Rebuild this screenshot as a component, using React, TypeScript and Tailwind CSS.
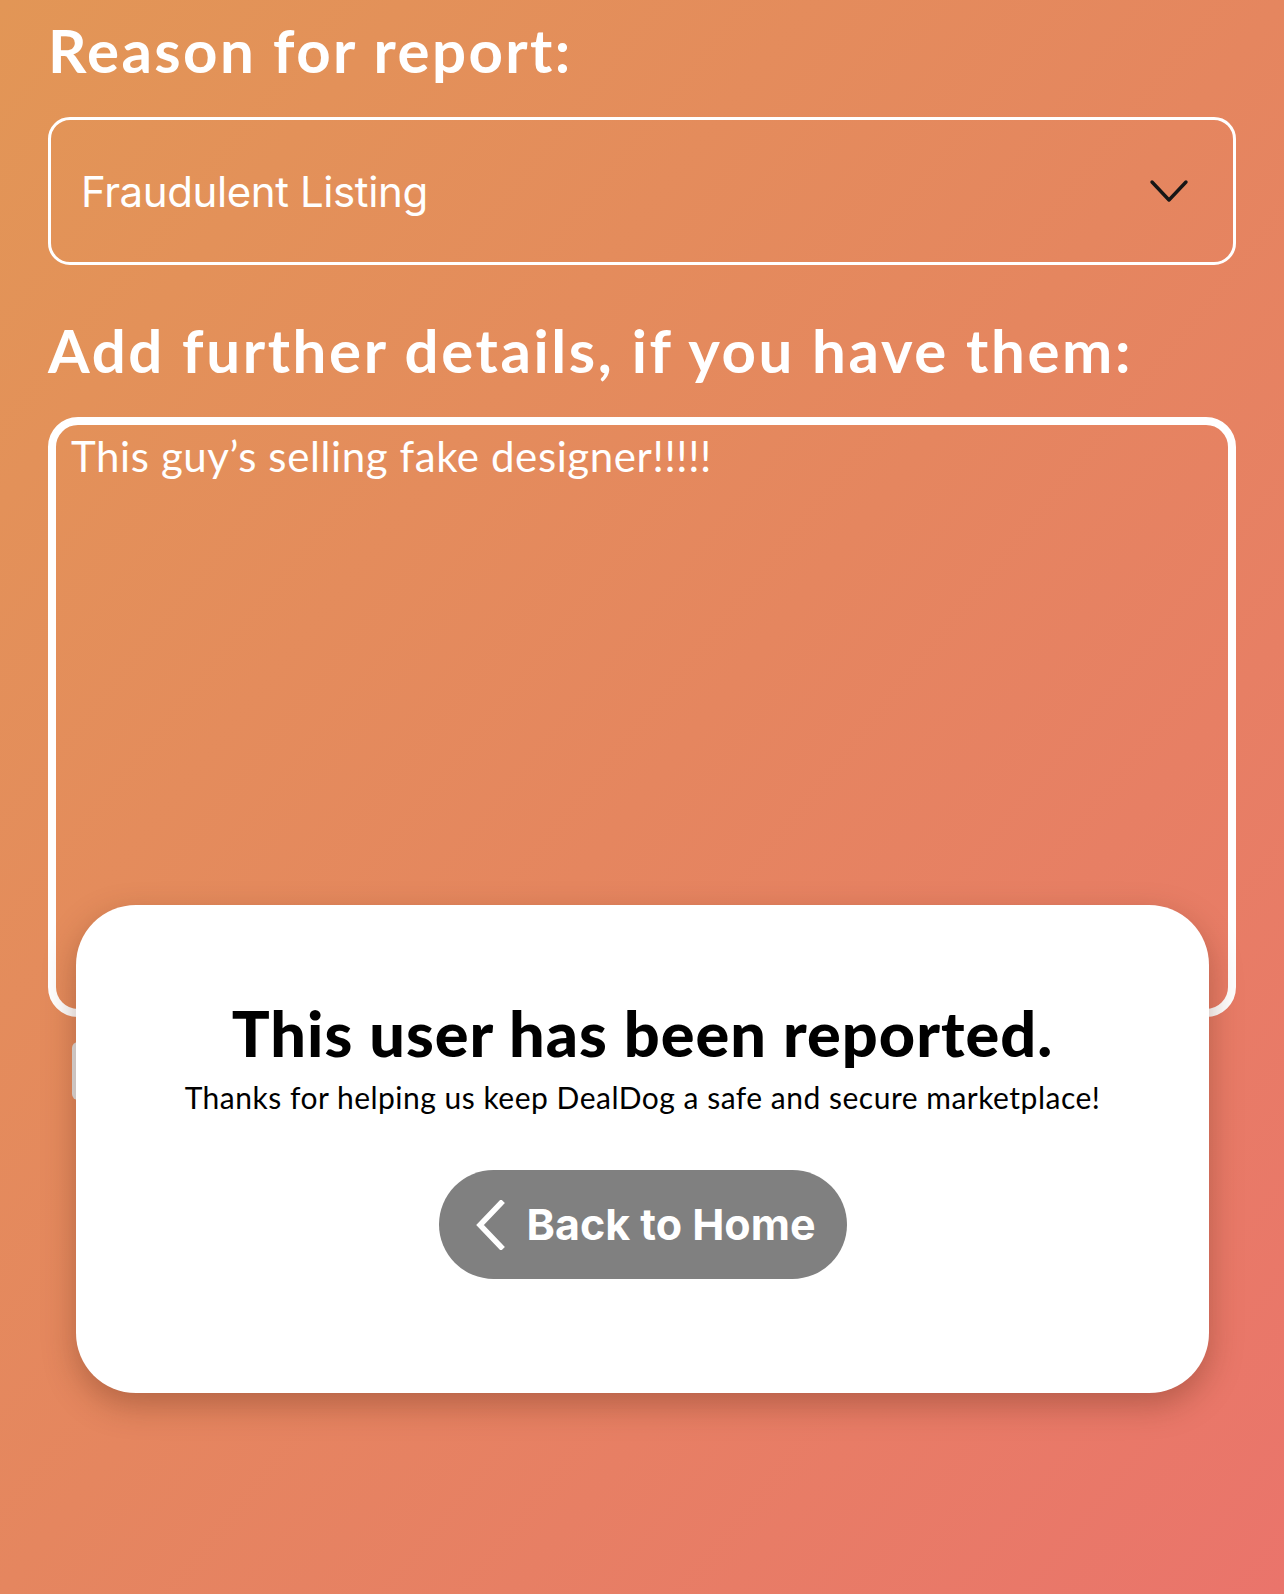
import { FC } from "react";

const avenir = "font-['Lato','Noto_Sans',sans-serif]";
const sfPro = "font-['Inter','Roboto',sans-serif]";

const ChevronDown: FC = () => (
  <svg width="40" height="24" viewBox="0 0 40 24" fill="none" className="shrink-0">
    <path
      d="M3 3 L20 21 L37 3"
      stroke="#161616"
      strokeWidth="3.4"
      strokeLinecap="round"
      strokeLinejoin="round"
    />
  </svg>
);

const ChevronLeft: FC = () => (
  <svg width="30" height="50" viewBox="0 0 30 50" fill="none" className="shrink-0">
    <path
      d="M26 3 L5 25 L26 47"
      stroke="white"
      strokeWidth="5.5"
      strokeLinecap="square"
      strokeLinejoin="miter"
    />
  </svg>
);

const ReportedModal: FC = () => {
  return (
    <div className="absolute left-[76px] right-[75px] top-[905px] h-[488px] rounded-[60px] bg-white shadow-[0_12px_32px_rgba(90,40,20,0.35)] flex flex-col items-center pt-[92px]">
      <h2 className={`${avenir} text-[63px] leading-[72px] font-black text-black tracking-[1px]`}>
        This user has been reported.
      </h2>
      <p className={`${avenir} mt-[10px] text-[30px] leading-[36px] text-black tracking-[0.5px]`}>
        Thanks for helping us keep DealDog a safe and secure marketplace!
      </p>
      <button
        type="button"
        className="mt-[55px] h-[109px] w-[408px] rounded-full bg-[#808080] flex items-center pl-[36px] gap-[22px]"
      >
        <ChevronLeft />
        <span className={`${sfPro} text-[43px] font-bold text-white`}>
          Back to Home
        </span>
      </button>
    </div>
  );
};

export default function App() {
  return (
    <div className="relative w-full h-[1594px] overflow-hidden bg-linear-to-br from-[#e29656] via-[#e5865f] to-[#ea746b]">
      <div className="flex flex-col px-[48px] pt-[14px]">
        <h1 className={`${avenir} text-[60px] leading-[72px] font-bold text-white tracking-[2.4px]`}>
          Reason for report:
        </h1>

        <div className="mt-[31px] h-[148px] rounded-[22px] border-[3px] border-white flex items-center justify-between pl-[30px] pr-[44px]">
          <span className={`${sfPro} text-[42px] text-white tracking-[-0.4px]`}>Fraudulent Listing</span>
          <ChevronDown />
        </div>

        <h1 className={`${avenir} mt-[49px] text-[60px] leading-[72px] font-bold text-white tracking-[2.6px]`}>
          Add further details, if you have them:
        </h1>

        <div className="mt-[31px] h-[600px] rounded-[30px] border-[8px] border-white pl-[15px] pt-[6px]">
          <p className={`${avenir} text-[42px] leading-[50px] text-white tracking-[0.6px]`}>
            This guy’s selling fake designer!!!!!
          </p>
        </div>

        {/* submit button, sits behind the modal */}
        <button
          type="button"
          aria-label="Submit report"
          className="ml-[24px] mr-[40px] mt-[25px] h-[58px] rounded-[6px] bg-[#e2e2e2]"
        />
      </div>

      <ReportedModal />
    </div>
  );
}
